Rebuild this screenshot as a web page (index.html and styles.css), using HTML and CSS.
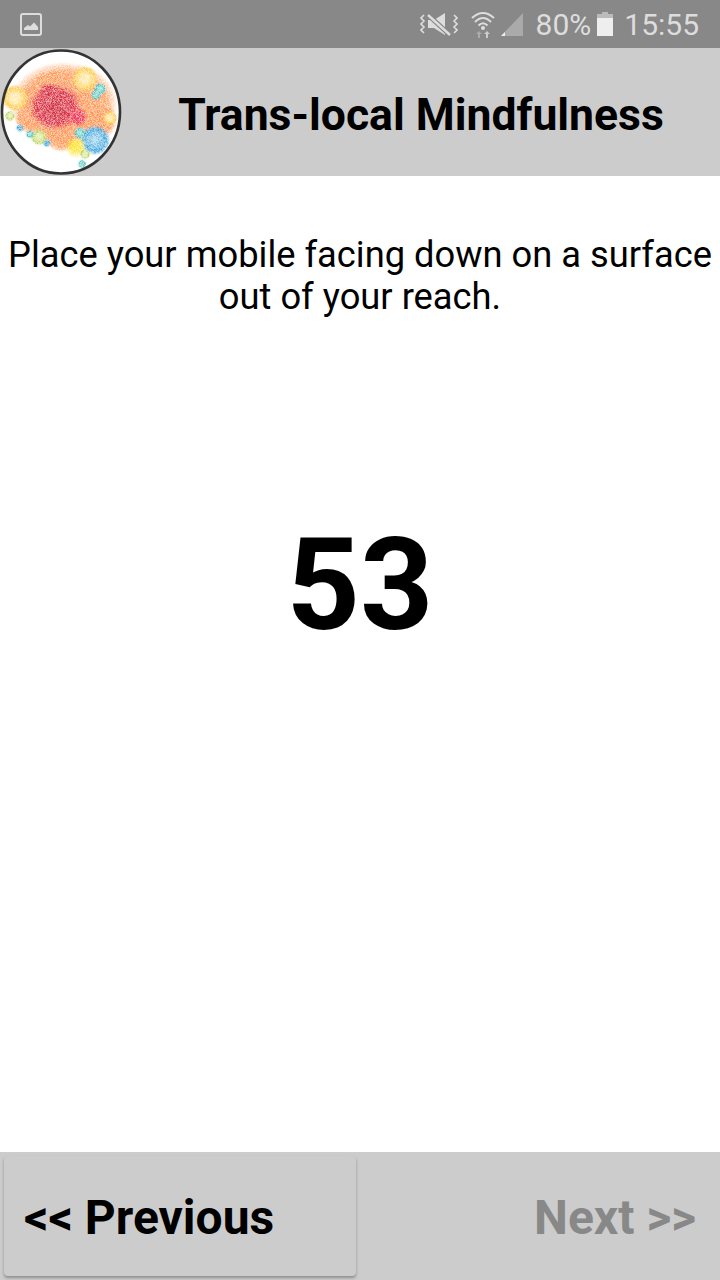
FILE: index.html
```html
<!DOCTYPE html>
<html lang="en">
<head>
    <meta charset="UTF-8">
    <meta name="viewport" content="width=device-width, initial-scale=1.0">
    <title>Trans-local Mindfulness</title>
    <link rel="stylesheet" href="styles.css">
</head>
<body>
    <div class="status-bar">
        <svg class="gallery-icon" width="24" height="24" viewBox="0 0 24 24">
            <rect x="2" y="2" width="20" height="21" rx="2" fill="none" stroke="#ddd" stroke-width="2"/>
            <path d="M5 18 L5 16 L9 13 L11 14.5 L15 10.5 L19 15 L19 18 Z" fill="#ddd"/>
        </svg>
        <div class="status-right">
            <svg class="mute-icon" width="38" height="28" viewBox="0 0 38 28">
                <path d="M4 5 L1 8 L4 11 L1 14 L4 17 L1 20 L4 23 M34 5 L37 8 L34 11 L37 14 L34 17 L37 20 L34 23" fill="none" stroke="#ddd" stroke-width="1.6"/>
                <path d="M8 10 H14 L25 3 V25 L14 18 H8 Z" fill="#ddd"/>
                <path d="M7 4 L31 26" stroke="#888" stroke-width="5"/>
                <path d="M8 5 L30 25" stroke="#ddd" stroke-width="2.4"/>
            </svg>
            <svg class="wifi-icon" width="24" height="28" viewBox="0 0 24 28">
                <path d="M1 8 Q12 -2 23 8 M4 12 Q12 4 20 12 M7.5 15.5 Q12 11 16.5 15.5" fill="none" stroke="#ddd" stroke-width="2"/>
                <circle cx="12" cy="18" r="2" fill="#ddd"/>
                <path d="M8 21 L5 24 H7 V28 H9 V24 H11 Z" fill="#aaa"/>
                <path d="M16 21 L13 24 H15 V28 H17 V24 H19 Z" fill="#ccc"/>
            </svg>
            <svg class="signal-icon" width="24" height="24" viewBox="0 0 24 24">
                <path d="M22 1 V24 H0 Z" fill="#aaa"/>
                <path d="M0 24 L4 20 V24 Z" fill="#eee"/>
            </svg>
            <span class="battery-text">80%</span>
            <svg class="battery-icon" width="16" height="24" viewBox="0 0 16 24">
                <path d="M5 0 H11 V2 H16 V24 H0 V2 H5 Z" fill="#eee"/>
                <rect x="0" y="2" width="16" height="4" fill="#bbb"/>
                <rect x="5" y="0" width="6" height="2" fill="#bbb"/>
            </svg>
            <span class="clock">15:55</span>
        </div>
    </div>

    <header class="app-header">
        <svg class="logo" width="122" height="128" viewBox="0 0 122 128">
            <defs>
                <filter id="speckle" x="0" y="0" width="100%" height="100%">
                    <feTurbulence type="fractalNoise" baseFrequency="1.7" numOctaves="2" seed="4" result="noise"/>
                    <feColorMatrix in="noise" type="matrix" values="0 0 0 0 0  0 0 0 0 0  0 0 0 0 0  0 0 0 3 -1" result="holes"/>
                    <feComposite in="SourceGraphic" in2="holes" operator="in" result="grain"/>
                    <feGaussianBlur in="SourceGraphic" stdDeviation="1.2"/>
                    <feColorMatrix type="matrix" values="1 0 0 0 0  0 1 0 0 0  0 0 1 0 0  0 0 0 0.45 0" result="haze"/>
                    <feGaussianBlur in="grain" stdDeviation="0.35" result="softGrain"/>
                    <feMerge>
                        <feMergeNode in="haze"/>
                        <feMergeNode in="softGrain"/>
                    </feMerge>
                </filter>
                <radialGradient id="orange">
                    <stop offset="0" stop-color="#ff9250"/>
                    <stop offset="0.75" stop-color="#ff9a58"/>
                    <stop offset="1" stop-color="#ffa868" stop-opacity="0"/>
                </radialGradient>
                <radialGradient id="red">
                    <stop offset="0" stop-color="#cf2a3c"/>
                    <stop offset="0.7" stop-color="#dc2f40"/>
                    <stop offset="1" stop-color="#e84a50" stop-opacity="0"/>
                </radialGradient>
                <radialGradient id="pink">
                    <stop offset="0.5" stop-color="#ee3050"/>
                    <stop offset="1" stop-color="#ee3050" stop-opacity="0"/>
                </radialGradient>
                <radialGradient id="blue">
                    <stop offset="0" stop-color="#a8d8f0"/>
                    <stop offset="0.75" stop-color="#3fa4dc"/>
                    <stop offset="1" stop-color="#3fa4dc" stop-opacity="0"/>
                </radialGradient>
                <radialGradient id="yellow">
                    <stop offset="0.4" stop-color="#ffe22a"/>
                    <stop offset="1" stop-color="#ffe22a" stop-opacity="0"/>
                </radialGradient>
                <radialGradient id="gold">
                    <stop offset="0.3" stop-color="#ffe9a8"/>
                    <stop offset="0.8" stop-color="#fcc63c"/>
                    <stop offset="1" stop-color="#fcc63c" stop-opacity="0"/>
                </radialGradient>
                <radialGradient id="teal">
                    <stop offset="0.3" stop-color="#8adcd0"/>
                    <stop offset="0.8" stop-color="#38b8b8"/>
                    <stop offset="1" stop-color="#38b8b8" stop-opacity="0"/>
                </radialGradient>
                <radialGradient id="green">
                    <stop offset="0.3" stop-color="#e4eea8"/>
                    <stop offset="0.8" stop-color="#b0cc50"/>
                    <stop offset="1" stop-color="#b0cc50" stop-opacity="0"/>
                </radialGradient>
                <radialGradient id="sky">
                    <stop offset="0.6" stop-color="#40a8d8"/>
                    <stop offset="1" stop-color="#40a8d8" stop-opacity="0"/>
                </radialGradient>
            </defs>
            <ellipse cx="61" cy="64" rx="59" ry="62" fill="#fff"/>
            <g filter="url(#speckle)">
                <ellipse cx="64" cy="56" rx="54" ry="42" fill="url(#orange)"/>
                <circle cx="62" cy="84" r="20" fill="url(#orange)"/>
                <circle cx="30" cy="70" r="15" fill="url(#orange)"/>
                <circle cx="97" cy="72" r="20" fill="url(#orange)"/>
                <circle cx="85" cy="31" r="13" fill="url(#gold)"/>
                <circle cx="15" cy="50" r="13" fill="url(#gold)"/>
                <circle cx="110" cy="70" r="7" fill="url(#gold)"/>
                <ellipse cx="55" cy="59" rx="27" ry="24" fill="url(#red)"/>
                <circle cx="48" cy="44" r="9" fill="url(#red)"/>
                <circle cx="78" cy="69" r="10" fill="url(#pink)"/>
                <circle cx="95" cy="92" r="15" fill="url(#blue)"/>
                <circle cx="76" cy="99" r="11" fill="url(#yellow)"/>
                <circle cx="80" cy="85" r="6" fill="url(#teal)"/>
                <circle cx="100" cy="41" r="6" fill="url(#teal)"/>
                <circle cx="96" cy="47" r="5" fill="url(#teal)"/>
                <circle cx="39" cy="89" r="8" fill="url(#green)"/>
                <circle cx="10" cy="68" r="5" fill="url(#green)"/>
                <circle cx="47" cy="95" r="4" fill="url(#sky)"/>
                <circle cx="30" cy="86" r="4" fill="url(#teal)"/>
                <circle cx="20" cy="80" r="4" fill="url(#sky)"/>
                <circle cx="85" cy="106" r="5" fill="url(#green)"/>
                <circle cx="82" cy="116" r="4" fill="url(#teal)"/>
            </g>
            <ellipse cx="61" cy="64" rx="59" ry="61.5" fill="none" stroke="#333" stroke-width="2.6"/>
        </svg>
        <h1 class="app-title">Trans-local Mindfulness</h1>
    </header>

    <main class="content">
        <p class="instruction">Place your mobile facing down on a surface out of your reach.</p>
        <div class="countdown">53</div>
    </main>

    <footer class="nav-bar">
        <button class="nav-button previous">&lt;&lt; Previous</button>
        <button class="nav-button next" disabled>Next &gt;&gt;</button>
    </footer>
</body>
</html>
```
FILE: styles.css
```css
* {
    box-sizing: border-box;
}
body {
    font-family: Roboto, sans-serif;
    display: flex;
    flex-direction: column;
    height: 1280px;
    margin: 0;
    background-color: #fff;
    color: #000;
    overflow: hidden;
}
.status-bar {
    display: flex;
    align-items: center;
    justify-content: space-between;
    flex: 0 0 48px;
    padding: 0 21px 0 19px;
    background-color: #888;
    color: #ddd;
}
.status-right {
    display: flex;
    align-items: center;
}
.mute-icon {
    margin-right: 13px;
}
.wifi-icon {
    margin-right: 6px;
}
.signal-icon {
    margin-right: 11px;
}
.battery-text {
    font-size: 30px;
    margin-right: 6px;
}
.battery-icon {
    margin-right: 11px;
}
.clock {
    font-size: 30px;
}
.app-header {
    display: flex;
    align-items: center;
    flex: 0 0 128px;
    background-color: #ccc;
}
.logo {
    flex: none;
}
.app-title {
    flex: 1;
    margin: 6px 0 0;
    font-size: 44.5px;
    font-weight: 700;
    text-align: center;
}
.content {
    flex: 1;
    display: flex;
    flex-direction: column;
    align-items: center;
}
.instruction {
    width: 100%;
    margin: 58px 0 0;
    font-size: 36.3px;
    line-height: 42px;
    text-align: center;
}
.countdown {
    margin-top: 192px;
    font-size: 128px;
    font-weight: 700;
    line-height: 150px;
}
.nav-bar {
    display: flex;
    justify-content: space-between;
    flex: 0 0 128px;
    padding: 4px;
    background-color: #ccc;
}
.nav-button {
    width: 352px;
    height: 120px;
    padding: 2px 20px 0;
    border: none;
    border-radius: 4px;
    background-color: #ccc;
    font-family: Roboto, sans-serif;
    font-size: 48px;
    font-weight: 700;
}
.previous {
    color: #000;
    text-align: left;
    box-shadow: 0 2px 3px rgba(0, 0, 0, 0.3);
}
.next {
    color: #888;
    text-align: right;
}
```
